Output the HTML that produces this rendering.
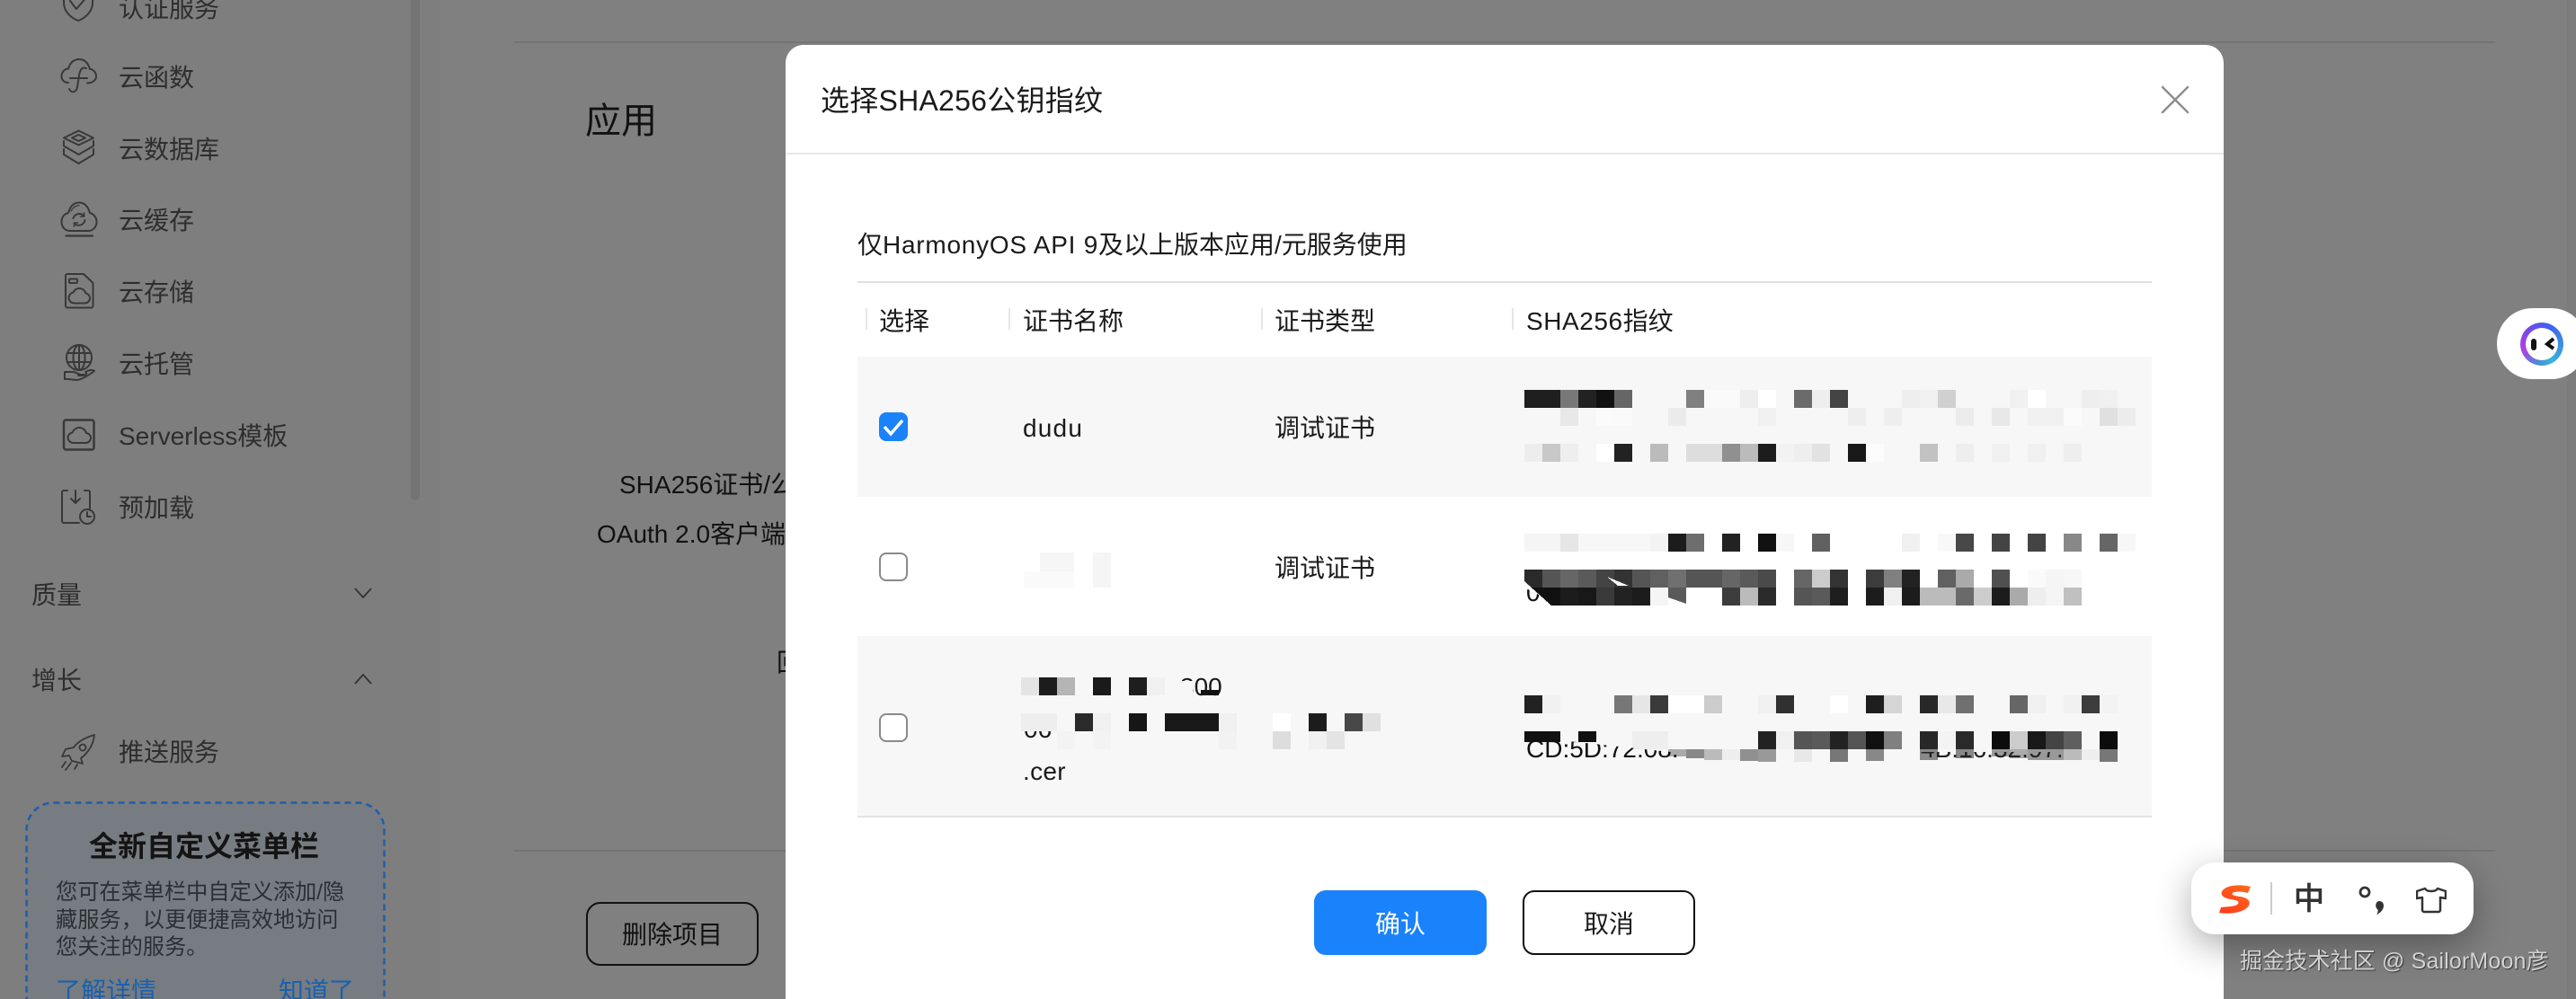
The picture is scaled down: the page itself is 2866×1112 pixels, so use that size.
<!DOCTYPE html>
<html lang="zh-CN">
<head>
<meta charset="utf-8">
<title>选择SHA256公钥指纹</title>
<style>
html,body{margin:0;padding:0;width:2866px;height:1112px;overflow:hidden;background:#808080}
body{position:relative;font-family:"Liberation Sans","Noto Sans CJK SC",sans-serif;color:#1a1a1a}
#root{position:absolute;left:0;top:0;width:2866px;height:1112px;overflow:hidden}
.t{position:absolute;white-space:nowrap;line-height:40px;height:40px;font-size:28px;margin-top:2px}
.s{color:#2e2e2e}
.i{position:absolute;left:67px;width:40px;height:40px;overflow:visible;fill:none;stroke:#383838;stroke-width:2;stroke-linecap:round;stroke-linejoin:round}
.b{position:absolute;box-sizing:border-box}
svg.m{position:absolute;left:0;top:0;width:2866px;height:1112px;shape-rendering:crispEdges}
svg.m rect{width:20px;height:20px}
</style>
</head>
<body>
<div id="root">
<!-- page background -->
<div class="b" style="left:0;top:0;width:490px;height:1112px;background:#7e7e7e"></div>
<div class="b" style="left:457px;top:0;width:10px;height:557px;background:#747474;border-radius:0 0 5px 5px"></div>
<div class="b" style="left:2856px;top:0;width:10px;height:1112px;background:#7b7b7b"></div>

<!-- sidebar -->
<svg class="i" style="top:-17px" viewBox="0 0 40 40"><path d="M20 2L36 7V20C36 30 28 37 20 40C12 37 4 30 4 20V7Z"/><path d="M11 18L18 27L30 13"/></svg>
<div class="t s" style="left:132px;top:-12px">认证服务</div>
<svg class="i" style="top:64px" viewBox="0 0 40 40"><path d="M9 28C4 28 1.500 24.500 1.500 21C1.500 16 5 12.500 9 12.500C11 6 15 2 21 2C27 2 31 6 33 13C37 13 40 17 40 21C40 25 36 28.500 30 28.500"/><path d="M29 12C24 10 22 14 21 20L19 33C18 39 12 40 10 35M11 23H30"/></svg>
<div class="t s" style="left:132px;top:65px">云函数</div>
<svg class="i" style="top:144px" viewBox="0 0 40 40"><path d="M20.500 1.500L37 9.500L20.500 17.500L4 9.500Z"/><path d="M20.500 6L28 9.500L20.500 13L13 9.500Z"/><path d="M4 13V18.500L20.500 28L37 18.500V13"/><path d="M4 22V28L20.500 38L37 28V22"/></svg>
<div class="t s" style="left:132px;top:145px">云数据库</div>
<svg class="i" style="top:225px" viewBox="0 0 40 40"><path d="M11 32C5 32 1.500 27 1.500 22C1.500 16 5 13 9 12C11 5 15 .5 21 .5C27 .5 31 5 33 12C37 13 40.500 17 40.500 22C40.500 27 37 32 31 32Z"/><path d="M12 10C14 6 17 4 21 3.500" stroke-width="1.200"/><path d="M14.500 18A7 7 0 0 1 26.500 15.500M27.500 20A7 7 0 0 1 15.500 23.500"/><path d="M26.500 12V16H22.500M15.500 27V23H19.500" stroke-width="1.500"/><path d="M6.500 37.500H36" stroke-width="2.200"/></svg>
<div class="t s" style="left:132px;top:224px">云缓存</div>
<svg class="i" style="top:304px" viewBox="0 0 40 40"><path d="M8 1H26L36.500 11V36.500A2 2 0 0 1 34.500 38.500H8A2 2 0 0 1 6 36.500V3A2 2 0 0 1 8 1Z"/><rect x="10" y="6.500" width="9" height="4.500" rx="1"/><path d="M16 33.500C12 33.500 9.500 30.500 9.500 27.500C9.500 24 12 22 14.500 21.500C16 18.500 18.500 17 21 17C25 17 27.500 19.500 28.500 22.500C31 23 33 25 33 28C33 31 30.500 33.500 27 33.500Z"/></svg>
<div class="t s" style="left:132px;top:304px">云存储</div>
<svg class="i" style="top:385px" viewBox="0 0 40 40"><circle cx="21" cy="13" r="14"/><ellipse cx="21" cy="13" rx="6.500" ry="14"/><path d="M8 8H34M8 18H34M21 -1V27"/><path d="M5 29V37M5 29H14C17 29 20 32 24 32H27C29 32.500 30 30 28 29M5 37H9L18 38C22 38 30 34 38 28C36 26 33 27 30 28M20 33H26"/></svg>
<div class="t s" style="left:132px;top:384px">云托管</div>
<svg class="i" style="top:464px" viewBox="0 0 40 40"><rect x="4" y="3.500" width="33.500" height="33" rx="2.500" stroke-width="2.400"/><path d="M15 29C11 29 8.500 26 8.500 23C8.500 20 11 18 13.500 17.500C15 14 18 12 21 12C25 12 28 14.500 29 18C32 18.500 34 20.500 34 23.500C34 26.500 31.500 29 28 29Z"/></svg>
<div class="t s" style="left:132px;top:464px">Serverless模板</div>
<svg class="i" style="top:544px" viewBox="0 0 40 40"><path d="M8 2H4A2 2 0 0 0 2 4V36A2 2 0 0 0 4 38H21M27 2H31A2 2 0 0 1 33 4V22"/><path d="M17 2V15M12 11L17 16L22 11"/><circle cx="30" cy="31" r="8"/><path d="M30 26V31H34"/></svg>
<div class="t s" style="left:132px;top:544px">预加载</div>

<div class="t s" style="left:35px;top:641px">质量</div>
<svg style="position:absolute;left:393px;top:652px" width="22" height="16" fill="none" stroke="#333" stroke-width="1.800"><path d="M2 3L11 13L20 3"/></svg>
<div class="t s" style="left:35px;top:736px">增长</div>
<svg style="position:absolute;left:393px;top:748px" width="22" height="16" fill="none" stroke="#333" stroke-width="1.800"><path d="M2 13L11 3L20 13"/></svg>
<svg class="i" style="top:817px;stroke-width:1.800" viewBox="0 0 40 40"><path d="M38 1C28 4 19 9 15 15L6 17L2 25L10 24L13 30L25 33L23 27C32 20 37 11 38 1Z"/><circle cx="25" cy="15" r="3.500"/><path d="M6 31L2 37M12 32L6 40M19 34L16 39"/></svg>
<div class="t s" style="left:132px;top:816px">推送服务</div>

<svg style="position:absolute;left:28px;top:892px" width="404" height="240"><rect x="1.500" y="1.500" width="398" height="300" rx="30" fill="#767c81" stroke="#1f5ea8" stroke-width="2.500" stroke-dasharray="7 5"/></svg>
<div class="t" style="left:98px;width:258px;text-align:center;top:920px;font-size:32px;font-weight:700;color:#141414">全新自定义菜单栏</div>
<div class="t" style="left:62px;top:972px;font-size:24.200px;color:#2b2f33">您可在菜单栏中自定义添加/隐</div>
<div class="t" style="left:62px;top:1003px;font-size:24.200px;color:#2b2f33">藏服务，以更便捷高效地访问</div>
<div class="t" style="left:62px;top:1033px;font-size:24.200px;color:#2b2f33">您关注的服务。</div>
<div class="t" style="left:62px;top:1082px;color:#1b5fae">了解详情</div>
<div class="t" style="left:310px;top:1082px;color:#1b5fae">知道了</div>

<!-- main behind -->
<div class="b" style="left:572px;top:46px;width:2204px;height:2px;background:#747474"></div>
<div class="b" style="left:572px;top:946px;width:2204px;height:2px;background:#747474"></div>
<div class="t" style="left:651px;top:113px;font-size:40px;color:#111">应用</div>
<div class="t" style="left:689px;top:518px;color:#111">SHA256证书/公钥指纹</div>
<div class="t" style="left:664px;top:573px;color:#111">OAuth 2.0客户端ID</div>
<div class="t" style="left:864px;top:716px;color:#111">回调</div>
<div class="b" style="left:652px;top:1004px;width:192px;height:71px;border:2px solid #111;border-radius:16px;font-size:28px;line-height:70px;text-align:center;color:#111">删除项目</div>

<!-- dialog -->
<div class="b" style="left:874px;top:50px;width:1600px;height:1062px;background:#fff;border-radius:20px 20px 0 0"></div>
<div class="t" style="left:913px;top:90px;font-size:32px;letter-spacing:.25px">选择SHA256公钥指纹</div>
<svg style="position:absolute;left:2404px;top:95px" width="32" height="32" fill="none" stroke="#8e8e8e" stroke-width="2.500" stroke-linecap="round"><path d="M2 2L30 30M30 2L2 30"/></svg>
<div class="b" style="left:874px;top:170px;width:1600px;height:2px;background:#e8e8e8"></div>
<div class="t" style="left:954px;top:251px">仅<span style="letter-spacing:.75px">HarmonyOS API 9</span>及以上版本应用/元服务使用</div>
<div class="b" style="left:954px;top:313px;width:1440px;height:2px;background:#e0e0e0"></div>

<div class="b" style="left:963px;top:343px;width:2px;height:24px;background:#e6e6e6"></div>
<div class="b" style="left:1122px;top:343px;width:2px;height:24px;background:#e6e6e6"></div>
<div class="b" style="left:1403px;top:343px;width:2px;height:24px;background:#e6e6e6"></div>
<div class="b" style="left:1682px;top:343px;width:2px;height:24px;background:#e6e6e6"></div>
<div class="t" style="left:978px;top:336px">选择</div>
<div class="t" style="left:1138px;top:336px">证书名称</div>
<div class="t" style="left:1418px;top:336px">证书类型</div>
<div class="t" style="left:1698px;top:336px"><span style="letter-spacing:.55px">SHA256</span>指纹</div>

<div class="b" style="left:954px;top:397px;width:1440px;height:156px;background:#f7f7f7"></div>
<div class="b" style="left:954px;top:708px;width:1440px;height:201px;background:#f7f7f7"></div>
<div class="b" style="left:954px;top:908px;width:1440px;height:2px;background:#e4e4e4"></div>

<div class="b" style="left:978px;top:459px;width:32px;height:32px;background:#1a82fa;border-radius:8px"></div>
<svg style="position:absolute;left:978px;top:459px" width="32" height="32" fill="none" stroke="#fff" stroke-width="3.500"><path d="M6 16L13 24L26 9"/></svg>
<div class="b" style="left:978px;top:615px;width:32px;height:32px;background:#fff;border:2px solid #8a8a8a;border-radius:8px"></div>
<div class="b" style="left:978px;top:794px;width:32px;height:32px;background:#fff;border:2px solid #8a8a8a;border-radius:8px"></div>

<div class="t" style="left:1138px;top:455px;letter-spacing:1.200px">dudu</div>
<div class="t" style="left:1418px;top:455px">调试证书</div>
<div class="t" style="left:1418px;top:611px">调试证书</div>
<div class="t" style="left:1313px;top:743px">300</div>
<div class="t" style="left:1139px;top:790px">06</div>
<div class="t" style="left:1138px;top:837px;letter-spacing:.3px">.cer</div>

<!-- mosaics -->
<svg class="m" viewBox="0 0 2866 1112">
<!-- row1 A y434 -->
<g transform="translate(0,434)">
<rect x="1696" fill="#1f1f1f"/><rect x="1716" fill="#1f1f1f"/><rect x="1736" fill="#787878"/><rect x="1756" fill="#222"/><rect x="1776" fill="#111"/><rect x="1796" fill="#666"/><rect x="1876" fill="#808080"/><rect x="1896" fill="#fafafa"/><rect x="1916" fill="#fafafa"/><rect x="1936" fill="#eee"/><rect x="1956" fill="#fff"/><rect x="1996" fill="#6b6b6b"/><rect x="2016" fill="#eee"/><rect x="2036" fill="#444"/><rect x="2116" fill="#eee"/><rect x="2136" fill="#f0f0f0"/><rect x="2156" fill="#d0d0d0"/><rect x="2236" fill="#f0f0f0"/><rect x="2256" fill="#fff"/><rect x="2316" fill="#eee"/><rect x="2336" fill="#f0f0f0"/>
</g>
<g transform="translate(0,454)">
<rect x="1736" fill="#e8e8e8"/><rect x="1776" fill="#fbfbfb"/><rect x="1796" fill="#fafafa"/><rect x="1856" fill="#ebebeb"/><rect x="1956" fill="#f0f0f0"/><rect x="2056" fill="#eee"/><rect x="2096" fill="#eee"/><rect x="2176" fill="#ececec"/><rect x="2216" fill="#e8e8e8"/><rect x="2256" fill="#f0f0f0"/><rect x="2276" fill="#f0f0f0"/><rect x="2296" fill="#fbfbfb"/><rect x="2336" fill="#e0e0e0"/><rect x="2356" fill="#ececec"/>
</g>
<g transform="translate(0,494)">
<rect x="1696" fill="#ededed"/><rect x="1716" fill="#c8c8c8"/><rect x="1736" fill="#eee"/><rect x="1776" fill="#fff"/><rect x="1796" fill="#222"/><rect x="1836" fill="#bbb"/><rect x="1876" fill="#ddd"/><rect x="1896" fill="#ddd"/><rect x="1916" fill="#909090"/><rect x="1936" fill="#bbb"/><rect x="1956" fill="#1c1c1c"/><rect x="1976" fill="#f2f2f2"/><rect x="1996" fill="#eee"/><rect x="2016" fill="#e2e2e2"/><rect x="2056" fill="#181818"/><rect x="2076" fill="#fcfcfc"/><rect x="2136" fill="#c2c2c2"/><rect x="2176" fill="#eee"/><rect x="2216" fill="#f0f0f0"/><rect x="2256" fill="#f0f0f0"/><rect x="2296" fill="#eee"/>
</g>
<!-- row2 A y594 -->
<g transform="translate(0,594)">
<rect x="1696" fill="#f5f5f5"/><rect x="1716" fill="#f5f5f5"/><rect x="1736" fill="#e6e6e6"/><rect x="1756" fill="#f7f7f7"/><rect x="1776" fill="#f7f7f7"/><rect x="1796" fill="#f7f7f7"/><rect x="1816" fill="#f7f7f7"/><rect x="1836" fill="#f3f3f3"/><rect x="1856" fill="#1c1c1c"/><rect x="1876" fill="#6e6e6e"/><rect x="1916" fill="#222"/><rect x="1956" fill="#111"/><rect x="1976" fill="#f7f7f7"/><rect x="2016" fill="#606060"/><rect x="2116" fill="#f0f0f0"/><rect x="2156" fill="#f8f8f8"/><rect x="2176" fill="#484848"/><rect x="2216" fill="#444"/><rect x="2256" fill="#444"/><rect x="2296" fill="#888"/><rect x="2336" fill="#666"/><rect x="2356" fill="#f7f7f7"/>
</g>
<g transform="translate(0,634)">
<rect x="1696" fill="#2a2a2a"/><rect x="1716" fill="#555"/><rect x="1736" fill="#666"/><rect x="1756" fill="#5a5a5a"/><rect x="1776" fill="#444"/><rect x="1796" fill="#333"/><rect x="1816" fill="#555"/><rect x="1836" fill="#606060"/><rect x="1856" fill="#707070"/><rect x="1876" fill="#555"/><rect x="1896" fill="#555"/><rect x="1916" fill="#666"/><rect x="1936" fill="#5a5a5a"/><rect x="1956" fill="#4a4a4a"/><rect x="1996" fill="#666"/><rect x="2016" fill="#ccc"/><rect x="2036" fill="#333"/><rect x="2076" fill="#3c3c3c"/><rect x="2096" fill="#808080"/><rect x="2116" fill="#222"/><rect x="2156" fill="#606060"/><rect x="2176" fill="#aaa"/><rect x="2216" fill="#505050"/><rect x="2256" fill="#fafafa"/><rect x="2276" fill="#f5f5f5"/><rect x="2296" fill="#f7f7f7"/>
</g>
<g transform="translate(0,654)">
<rect x="1696" fill="#111"/><rect x="1716" fill="#111"/><rect x="1736" fill="#1c1c1c"/><rect x="1756" fill="#181818"/><rect x="1776" fill="#3a3a3a"/><rect x="1796" fill="#222"/><rect x="1816" fill="#1c1c1c"/><rect x="1836" fill="#f5f5f5"/><rect x="1856" fill="#5a5a5a"/><rect x="1916" fill="#3c3c3c"/><rect x="1936" fill="#bbb"/><rect x="1956" fill="#2a2a2a"/><rect x="1996" fill="#555"/><rect x="2016" fill="#5a5a5a"/><rect x="2036" fill="#1e1e1e"/><rect x="2076" fill="#1c1c1c"/><rect x="2096" fill="#f0f0f0"/><rect x="2116" fill="#1c1c1c"/><rect x="2136" fill="#bbb"/><rect x="2156" fill="#bbb"/><rect x="2176" fill="#6a6a6a"/><rect x="2196" fill="#ccc"/><rect x="2216" fill="#1c1c1c"/><rect x="2236" fill="#aaa"/><rect x="2256" fill="#eee"/><rect x="2276" fill="#f5f5f5"/><rect x="2296" fill="#c0c0c0"/>
</g>
<polygon points="1696,647 1696,674 1726,674" fill="#fff"/>
<polygon points="1788,642 1812,652 1800,652" fill="#fff"/>
<polygon points="1856,665 1876,672 1876,674 1856,674" fill="#fff"/>
<!-- row3 -->
<g transform="translate(0,774)">
<rect x="1696" fill="#222"/><rect x="1716" fill="#f0f0f0"/><rect x="1796" fill="#777"/><rect x="1816" fill="#e6e6e6"/><rect x="1836" fill="#3a3a3a"/><rect x="1856" fill="#fff"/><rect x="1876" fill="#fff"/><rect x="1896" fill="#ccc"/><rect x="1956" fill="#f0f0f0"/><rect x="1976" fill="#303030"/><rect x="2036" fill="#fff"/><rect x="2076" fill="#1e1e1e"/><rect x="2096" fill="#d5d5d5"/><rect x="2136" fill="#282828"/><rect x="2156" fill="#e8e8e8"/><rect x="2176" fill="#707070"/><rect x="2236" fill="#666"/><rect x="2256" fill="#f0f0f0"/><rect x="2296" fill="#f0f0f0"/><rect x="2316" fill="#3c3c3c"/><rect x="2336" fill="#f3f3f3"/>
</g>
<g transform="translate(0,814)">
<rect x="1696" fill="#111" style="height:12px"/><rect x="1716" fill="#111" style="height:12px"/><rect x="1756" fill="#111" style="height:12px"/><rect x="1816" fill="#eee"/><rect x="1836" fill="#eee"/><rect x="1956" fill="#222"/><rect x="1976" fill="#f0f0f0"/><rect x="1996" fill="#555"/><rect x="2016" fill="#5a5a5a"/><rect x="2036" fill="#222"/><rect x="2056" fill="#555"/><rect x="2076" fill="#111"/><rect x="2096" fill="#808080"/><rect x="2136" fill="#282828"/><rect x="2156" fill="#f3f3f3"/><rect x="2176" fill="#2a2a2a"/><rect x="2216" fill="#0c0c0c"/><rect x="2236" fill="#ccc"/><rect x="2256" fill="#181818"/><rect x="2276" fill="#444"/><rect x="2296" fill="#5f5f5f"/><rect x="2336" fill="#0c0c0c"/>
</g>
<g transform="translate(0,834)">
<rect x="1856" fill="#aaa" style="height:8px"/><rect x="1876" fill="#888" style="height:10px"/><rect x="1896" fill="#bbb" style="height:12px"/><rect x="1916" fill="#eee" style="height:12px"/><rect x="1936" fill="#909090" style="height:13px"/><rect x="1956" fill="#999" style="height:14px"/><rect x="1996" fill="#e8e8e8" style="height:14px"/><rect x="2036" fill="#777" style="height:14px"/><rect x="2076" fill="#888" style="height:13px"/><rect x="2136" fill="#888" style="height:12px"/><rect x="2176" fill="#888" style="height:10px"/><rect x="2216" fill="#999" style="height:8px"/><rect x="2236" fill="#aaa" style="height:10px"/><rect x="2256" fill="#999" style="height:12px"/><rect x="2276" fill="#999" style="height:12px"/><rect x="2296" fill="#bbb" style="height:12px"/><rect x="2316" fill="#eee" style="height:12px"/><rect x="2336" fill="#777" style="height:14px"/>
</g>
<!-- names -->
<rect x="1313" y="758" fill="#f7f7f7" style="width:14px;height:18px"/>
<g transform="translate(0,754)">
<rect x="1136" fill="#e4e4e4"/><rect x="1156" fill="#1c1c1c"/><rect x="1176" fill="#b5b5b5"/><rect x="1216" fill="#1a1a1a"/><rect x="1256" fill="#1e1e1e"/><rect x="1276" fill="#f0f0f0"/><rect x="1336" y="14" fill="#111" style="height:6px"/>
</g>
<g transform="translate(0,794)">
<rect x="1136" fill="#eee"/><rect x="1156" fill="#eee"/><rect x="1196" fill="#2a2a2a"/><rect x="1216" fill="#f0f0f0"/><rect x="1256" fill="#161616"/><rect x="1296" fill="#181818"/><rect x="1316" fill="#181818"/><rect x="1336" fill="#181818"/><rect x="1356" fill="#f0f0f0"/><rect x="1416" fill="#fff"/><rect x="1456" fill="#1c1c1c"/><rect x="1496" fill="#484848"/><rect x="1516" fill="#e0e0e0"/>
</g>
<g transform="translate(0,814)">
<rect x="1416" fill="#ddd"/><rect x="1456" fill="#f0f0f0"/><rect x="1476" fill="#e4e4e4"/><rect x="1356" fill="#f2f2f2"/><rect x="1216" fill="#f3f3f3"/><rect x="1176" fill="#f3f3f3"/>
</g>
<rect x="1157" y="615" fill="#f6f6f6" style="width:38px;height:22px"/>
<rect x="1216" y="615" fill="#f5f5f5" style="width:20px;height:39px"/>
<rect x="1139" y="636" fill="#fafafa" style="width:56px;height:18px"/>
</svg>
<div class="t" style="left:1698px;top:638px;clip-path:polygon(0 15px,22px 26px,22px 40px,0 40px);color:#111">0</div>
<div class="t" style="left:1698px;top:812px;width:170px;overflow:hidden;color:#111;clip-path:polygon(0 6px,170px 24px,170px 40px,0 40px)">CD:5D:72:08:A5</div>
<div class="t" style="left:2137px;top:812px;width:156px;overflow:hidden;clip-path:inset(23px 0 0 0);color:#222">4B:16:32:97:AC</div>

<!-- footer buttons -->
<div class="b" style="left:1462px;top:991px;width:192px;height:72px;background:#1a82fa;border-radius:13px;color:#fff;font-size:28px;line-height:75px;text-align:center">确认</div>
<div class="b" style="left:1694px;top:991px;width:192px;height:72px;background:#fff;border:2px solid #111;border-radius:13px;font-size:28px;line-height:71px;text-align:center">取消</div>

<!-- floating widget -->
<div class="b" style="left:2778px;top:343px;width:100px;height:79px;background:#fff;border-radius:40px"></div>
<div class="b" style="left:2804px;top:359px;width:48px;height:48px;border-radius:50%;background:conic-gradient(from 20deg,#3f60f0,#38b4d8 130deg,#4a8ed8 170deg,#b040e0 235deg,#7a48ea 290deg,#3f60f0)"></div>
<div class="b" style="left:2810px;top:365px;width:36px;height:36px;border-radius:50%;background:#fff"></div>
<div class="b" style="left:2816px;top:377px;width:6px;height:13px;border-radius:3px;background:#111"></div>
<svg style="position:absolute;left:2830px;top:375px" width="14" height="16" fill="none" stroke="#111" stroke-width="4"><path d="M11 2L4 8L11 13"/></svg>

<!-- IME bar -->
<div class="b" style="left:2438px;top:960px;width:314px;height:80px;background:#fff;border-radius:26px;box-shadow:0 12px 40px rgba(0,0,0,.32)"></div>
<svg style="position:absolute;left:2468px;top:984px" width="36" height="33" viewBox="0 0 36 33"><defs><linearGradient id="sg" x1="0" y1="1" x2="1" y2="0"><stop offset="0" stop-color="#ff3a1c"/><stop offset="1" stop-color="#ff6a1a"/></linearGradient></defs><path fill="url(#sg)" d="M36 3C24 0 10 1 5 7C1 12 6 16 14 17C20 18 24 19 22 22C20 25 12 25 3 26L1 32C12 34 29 32 34 24C37 18 31 15 24 14C18 13 14 12 16 10C18 8 26 8 33 10Z"/></svg>
<div class="b" style="left:2526px;top:982px;width:2px;height:36px;background:#ccc"></div>
<div class="t" style="left:2552px;top:979px;font-size:34px;color:#333;-webkit-text-stroke:1px #333">中</div>
<svg style="position:absolute;left:2622px;top:984px" width="36" height="36" fill="none" stroke="#333"><circle cx="9" cy="9" r="5" stroke-width="2.800"/><path d="M25 19C28 19 30 21 30 24C30 28 27 32 22 34C24 31 24 29 23 28C20 26 21 19 25 19Z" fill="#333" stroke="none"/></svg>
<svg style="position:absolute;left:2688px;top:987px" width="34" height="30" fill="none" stroke="#333" stroke-width="2.500" stroke-linejoin="round"><path d="M10 2C12 6 22 6 24 2L33 5V13L27 12V26A2 2 0 0 1 25 28H9A2 2 0 0 1 7 26V12L1 13V5Z"/></svg>

<!-- watermark -->
<div class="t" style="left:2492px;top:1048px;font-size:25px;letter-spacing:.15px;color:#d2d2d2;text-shadow:1px 1px 1px #333">掘金技术社区 @ SailorMoon彦</div>
</div>
</body>
</html>
